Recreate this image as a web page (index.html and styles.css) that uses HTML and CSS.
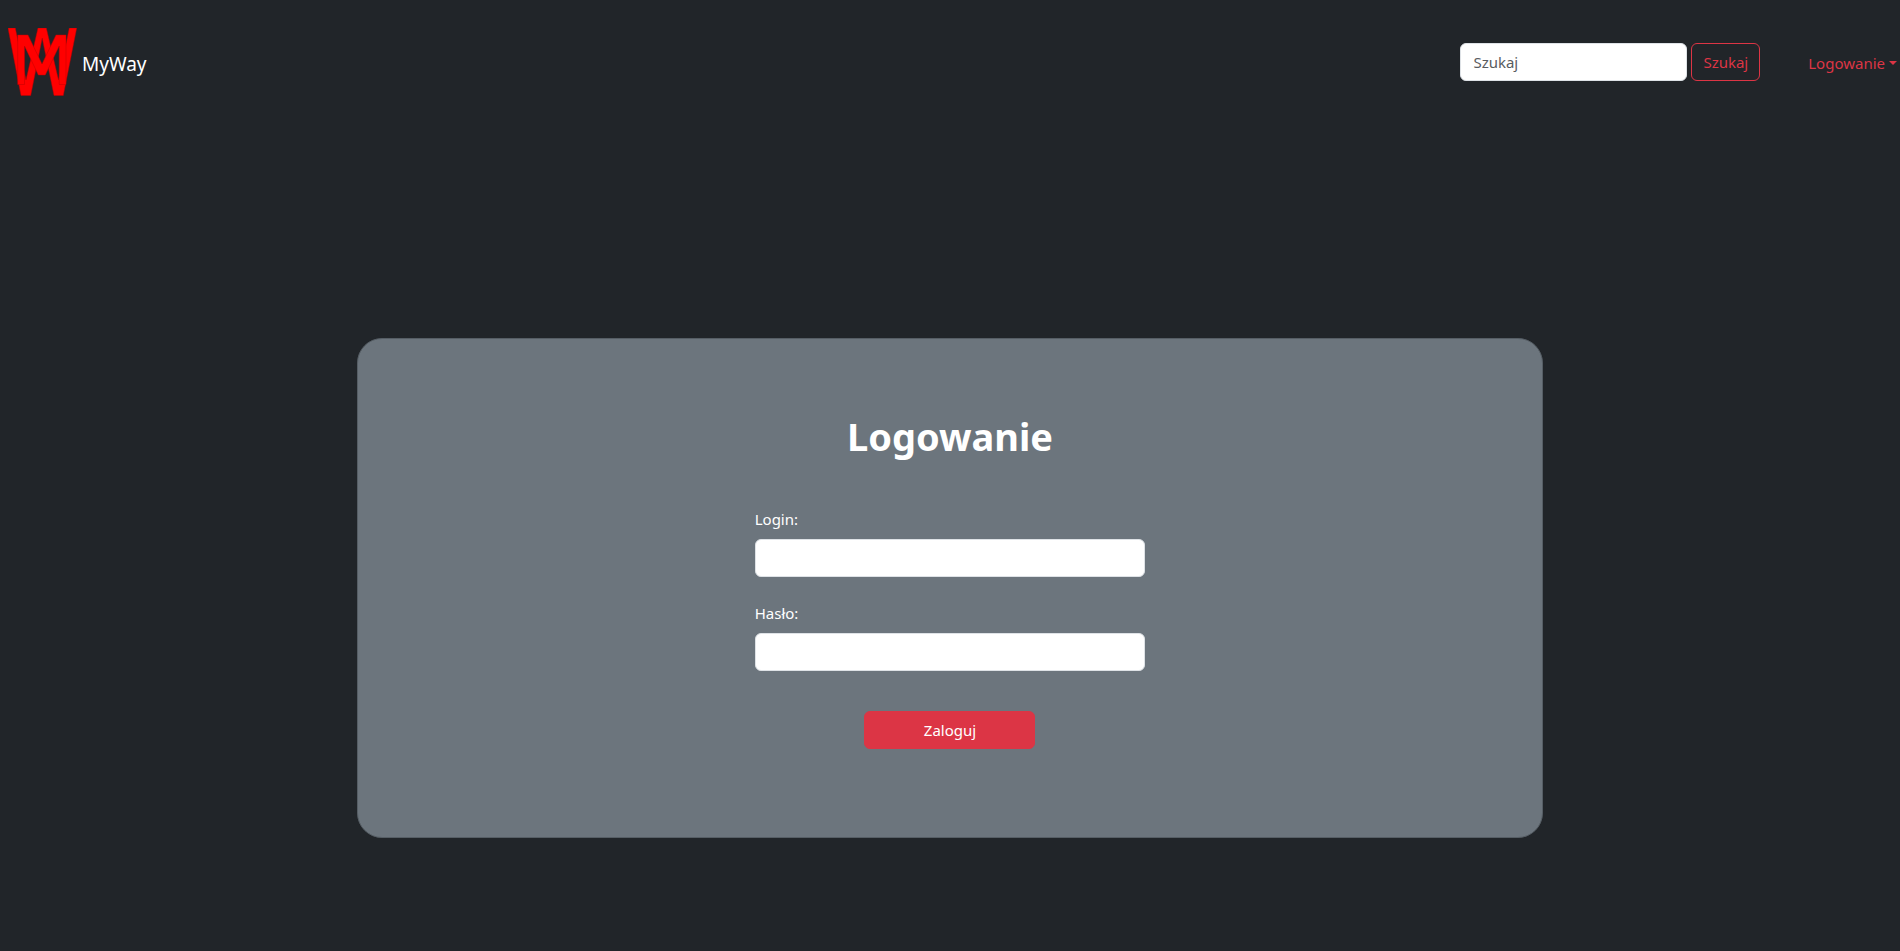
FILE: index.html
```html
<!DOCTYPE html>
<html lang="pl">
<head>
<meta charset="utf-8">
<title>MyWay</title>
<link rel="stylesheet" href="styles.css">
</head>
<body>
<header class="navbar">
  <a class="brand" href="#">
    <svg class="logo" viewBox="8 28 69 68" aria-hidden="true">
      <path d="M8 28h7.300L26 80 38 28h8.300L58.500 80 69.300 28h7.400L63.300 95.500h-9.300L42.200 38 30.700 95.500H21z"/>
      <path d="M17.700 35h10.300L42 64 56 35h10v49.500h-6.800V46L45.300 75h-7L24.500 46v38.500h-6.800z"/>
    </svg>
    <span>MyWay</span>
  </a>
  <form class="search">
    <input class="field" type="search" placeholder="Szukaj" aria-label="Szukaj">
    <button class="btn btn-outline" type="submit">Szukaj</button>
  </form>
  <a class="menu" href="#">Logowanie<span class="caret"></span></a>
</header>
<main class="card">
  <h1 class="title">Logowanie</h1>
  <form class="login">
    <label class="label" for="login">Login:</label>
    <input class="field" id="login" type="text">
    <label class="label" for="password">Hasło:</label>
    <input class="field" id="password" type="password">
    <button class="btn btn-solid" type="submit">Zaloguj</button>
  </form>
</main>
</body>
</html>
```
FILE: styles.css
```css
* { box-sizing: border-box; }
body {
  margin: 0;
  background: #212529;
  color: #fff;
  font: 15px/24px "Noto Sans", "Open Sans", sans-serif;
}
.navbar {
  display: flex;
  align-items: center;
  padding: 28px 3px 28px 8px;
}
.brand {
  display: flex;
  align-items: center;
  gap: 5px;
  margin-right: auto;
  color: #fff;
  font-size: 19px;
  line-height: 30px;
  text-decoration: none;
}
.brand span { padding-top: 4px; }
.logo {
  width: 69px;
  height: 68px;
  fill: #f00;
  stroke: #c00000;
  stroke-width: 0.5;
}
.search {
  display: flex;
  gap: 4px;
  margin-right: 48px;
}
.field {
  width: 100%;
  height: 38px;
  padding: 6px 12px;
  border: 1px solid #dee2e6;
  border-radius: 6px;
  background: #fff;
  color: #212529;
  font: inherit;
  appearance: none;
}
.search .field { width: 227px; }
.field::placeholder { color: #595c5f; opacity: 1; }
.btn {
  height: 38px;
  padding: 6px 12px;
  border: 1px solid #dc3545;
  border-radius: 6px;
  font: inherit;
  cursor: pointer;
}
.btn-outline { padding: 6px 11px; background: transparent; color: #dc3545; }
.btn-solid { background: #dc3545; color: #fff; }
.menu {
  display: flex;
  align-items: center;
  gap: 4px;
  padding-top: 1px;
  color: #dc3545;
  text-decoration: none;
}
.caret {
  border: 4px solid transparent;
  border-top-color: #dc3545;
  border-bottom: 0;
}
.card {
  width: 62.4%;
  margin: 214px auto 111px;
  padding: 73px 0 88px;
  border: 1px solid #565e65;
  border-radius: 25px;
  background: #6c757d;
}
.title {
  margin: 0 0 47px;
  font-size: 38px;
  line-height: 48px;
  font-weight: 700;
  text-align: center;
}
.login {
  display: flex;
  flex-direction: column;
  width: 33%;
  margin: 0 auto;
}
.label { margin-bottom: 8px; }
.login .field { margin-bottom: 24px; }
.btn-solid {
  align-self: center;
  width: 171px;
  margin-top: 16px;
}
```
